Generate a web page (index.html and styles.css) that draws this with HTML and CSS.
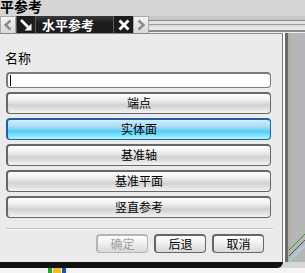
FILE: index.html
```html
<!DOCTYPE html>
<html lang="zh">
<head>
    <meta charset="UTF-8">
    <title>水平参考</title>
    <link rel="stylesheet" href="styles.css">
</head>
<body>
    <div class="title">平参考</div>
    <div class="tabbar">
        <div class="nav-btn">
            <svg width="10" height="12" viewBox="0 0 10 12">
                <path d="M7.5 1.5 L2.5 6 L7.5 10.5" fill="none" stroke="#8a8a8a" stroke-width="2.4"/>
            </svg>
        </div>
        <div class="tab tab-icon">
            <svg width="14" height="14" viewBox="0 0 14 14">
                <line x1="2" y1="2" x2="9" y2="9" stroke="#fff" stroke-width="2.6"/>
                <polygon points="12.5,12.5 12.5,5.5 5.5,12.5" fill="#fff"/>
            </svg>
        </div>
        <div class="tab tab-name">水平参考</div>
        <div class="tab tab-close">
            <svg width="12" height="12" viewBox="0 0 12 12">
                <path d="M1.5 1.5 L10.5 10.5 M10.5 1.5 L1.5 10.5" stroke="#fff" stroke-width="2.8"/>
            </svg>
        </div>
        <div class="nav-btn">
            <svg width="10" height="12" viewBox="0 0 10 12">
                <path d="M2.5 1.5 L7.5 6 L2.5 10.5" fill="none" stroke="#8a8a8a" stroke-width="2.4"/>
            </svg>
        </div>
        <div class="tab-rest"></div>
    </div>
    <div class="main">
        <div class="panel">
            <div class="label">名称</div>
            <div class="name-input"><span class="caret"></span></div>
            <div class="options">
                <div class="opt">端点</div>
                <div class="opt selected">实体面</div>
                <div class="opt">基准轴</div>
                <div class="opt">基准平面</div>
                <div class="opt">竖直参考</div>
            </div>
            <div class="sep"></div>
            <div class="actions">
                <div class="act disabled">确定</div>
                <div class="act">后退</div>
                <div class="act">取消</div>
            </div>
        </div>
        <div class="side">
            <svg class="side-lines" width="16" height="30" viewBox="0 0 16 30">
                <line x1="0" y1="18" x2="16" y2="2" stroke="#2a9a2a" stroke-width="1"/>
                <line x1="0" y1="24" x2="16" y2="8" stroke="#555" stroke-width="1"/>
                <line x1="0" y1="29" x2="16" y2="13" stroke="#aac8d8" stroke-width="3"/>
            </svg>
        </div>
    </div>
    <div class="footer">
        <div class="footer-bar"></div>
        <div class="footer-strip">
            <span class="dot green"></span><span class="dot yellow"></span><span class="dot blue"></span>
        </div>
    </div>
</body>
</html>
```

FILE: styles.css
```css
body { margin: 0; width: 305px; height: 273px; overflow: hidden; background: #d6d6d6; font-family: "Noto Sans CJK SC", "DejaVu Sans", sans-serif; font-size: 12px; color: #000; }
.title { height: 16px; line-height: 13px; font-size: 14px; font-weight: bold; }
.tabbar { display: flex; height: 17px; }
.nav-btn { width: 14px; height: 16px; background: linear-gradient(#f4f4f4, #d8d8d8); border: 1px solid #a8a8a8; border-bottom: none; display: flex; align-items: center; justify-content: center; }
.tab { height: 17px; background: #1c1c1c; border-left: 1px solid #5a5a5a; display: flex; align-items: center; justify-content: center; box-sizing: border-box; }
.tab-icon { width: 19px; }
.tab-name { width: 78px; color: #fff; font-weight: bold; font-size: 13px; line-height: 15px; justify-content: flex-start; padding-left: 6px; background: linear-gradient(#3a3a3a, #1c1c1c 40%); }
.tab-close { width: 20px; }
.tab-rest { flex: 1; height: 17px; background: linear-gradient(#c8c8c8 0, #c8c8c8 4px, #888 4px, #888 5px, #e4e4e4 5px, #e4e4e4 8px, #9a9a9a 8px, #9a9a9a 9px, #d8d8d8 9px, #f0f0f0 14px, #8a8a8a 14px, #8a8a8a 16px, #eee 16px); }
.main { display: flex; height: 229px; }
.panel { width: 283px; box-sizing: border-box; background: #ebebeb; border-top: 1px solid #8a8a8a; border-right: 1px solid #7a7a7a; padding: 16px 11px 0 6px; }
.label { height: 16px; line-height: 16px; margin-left: -1px; font-size: 13px; }
.name-input { margin-top: 6px; height: 16px; box-sizing: border-box; background: #fff; border: 2px solid #7a7a7a; border-radius: 4px; border-right-width: 1px; border-bottom-width: 1px; padding-left: 2px; display: flex; align-items: center; }
.caret { width: 1px; height: 11px; background: #000; }
.options { display: flex; flex-direction: column; gap: 4px; margin-top: 4px; }
.opt { height: 22px; box-sizing: border-box; border: 1px solid #666; border-left-width: 2px; border-top-width: 2px; border-radius: 4px; background: linear-gradient(#ffffff, #f0f0f0 30%, #d2d2d2 60%, #e6e6e6 85%, #f4f4f4); text-align: center; line-height: 18px; }
.opt.selected { border-color: #1f5fa8; background: linear-gradient(#d4ecfb, #a8dcf6 35%, #58ccf4 60%, #8ae6fb 85%, #b8f2fd); }
.sep { margin-top: 10px; margin-right: -2px; height: 1px; background: #c4c4c4; border-bottom: 1px solid #fafafa; }
.actions { display: flex; justify-content: flex-end; gap: 6px; margin-top: 4px; padding-right: 7px; }
.act { width: 52px; height: 19px; box-sizing: border-box; border: 1px solid #666; border-left-width: 2px; border-top-width: 2px; border-radius: 4px; background: linear-gradient(#ffffff, #eeeeee 50%, #d8d8d8); text-align: center; line-height: 15px; }
.act.disabled { color: #a0a0a0; border-color: #b4b4b4; }
.side { flex: 1; background: #b6b6b6; border-left: 2px solid #fdfdfd; box-shadow: inset 3px 0 0 #6a6a6a, inset 5px 0 0 #b0b0a0; position: relative; }
.side-lines { position: absolute; left: 4px; bottom: 0; }
.footer { height: 11px; display: flex; flex-direction: column; }
.footer-bar { width: 283px; height: 6px; background: #111; border-radius: 0 0 6px 0; }
.footer-strip { flex: 1; background: #f4f4f4; display: flex; padding-left: 48px; gap: 1px; }
.dot { width: 4px; height: 5px; }
.dot.green { background: #2aa02a; }
.dot.yellow { background: #f0c020; width: 8px; }
.dot.blue { background: #2050c0; }
```
